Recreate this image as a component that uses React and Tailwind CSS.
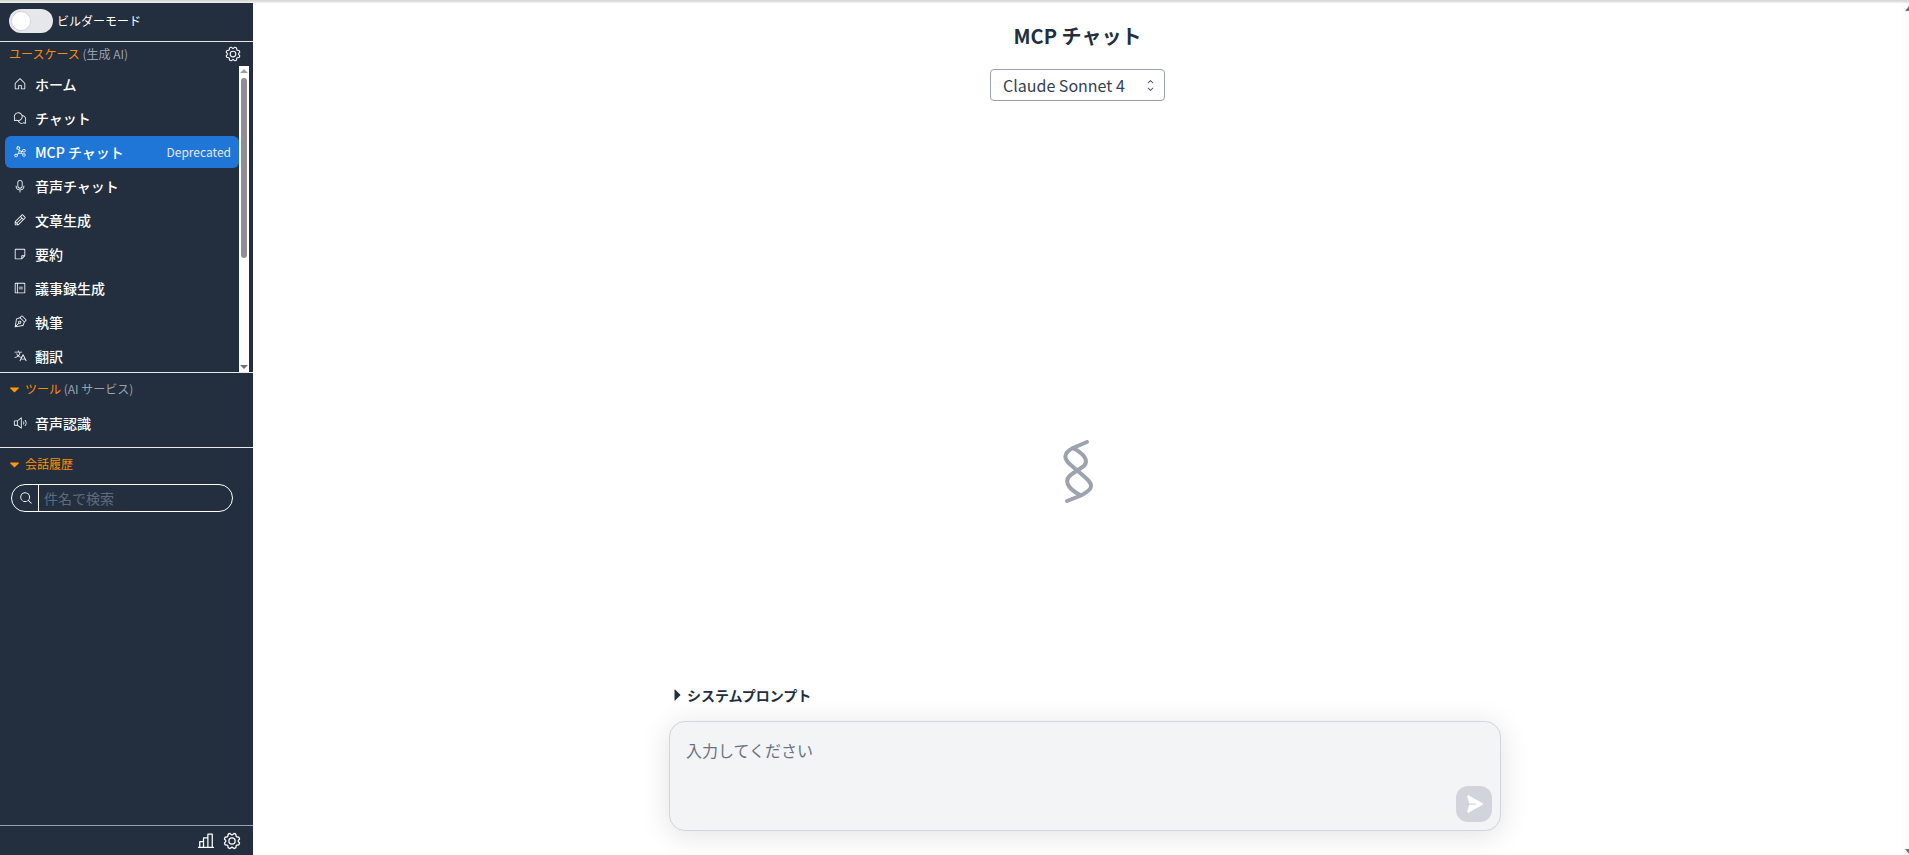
import React from "react";
import {
  PiHouse, PiChatsCircle, PiGraph, PiMicrophone, PiPencil, PiNoteBlank, PiNotebook, PiPenNib, PiTranslate,
  PiSpeakerHigh, PiMagnifyingGlass, PiGear, PiChartBar, PiCaretUpDown, PiPaperPlaneRightFill, PiCaretDownFill, PiCaretRightFill,
} from "react-icons/pi";

const items = [
  [PiHouse, "ホーム"],
  [PiChatsCircle, "チャット"],
  [PiGraph, "MCP チャット", true],
  [PiMicrophone, "音声チャット"],
  [PiPencil, "文章生成"],
  [PiNoteBlank, "要約"],
  [PiNotebook, "議事録生成"],
  [PiPenNib, "執筆"],
  [PiTranslate, "翻訳"],
];

function Item({ icon: Icon, label, active }) {
  return (
    <div className={`flex h-8 shrink-0 items-center rounded-md pl-2 pr-2 text-sm font-medium text-white ${active ? "bg-[#1f76d6]" : ""}`}>
      <Icon className="mr-2 h-[14px] w-[14px] shrink-0 text-gray-100" />
      <span className="flex-1">{label}</span>
      {active && <span className="text-xs font-normal text-gray-200">Deprecated</span>}
    </div>
  );
}

export default function App() {
  return (
    <div className="flex h-[855px] w-full flex-col overflow-hidden bg-white text-[#232f3e] [font-family:'Noto_Sans_CJK_JP','Noto_Sans',sans-serif]">
      <div className="h-[3px] shrink-0 bg-gradient-to-b from-[#d2d2ce] to-[#f2f2ee]" />
      <div className="flex min-h-0 flex-1">
        <aside className="flex w-[253px] shrink-0 flex-col bg-[#232f3e] text-white">
          <div className="flex h-[38px] shrink-0 items-center pb-[2px] pl-[9px]">
            <div className="flex h-6 w-11 items-center rounded-full bg-gray-200 pl-[2px]">
              <div className="h-5 w-5 rounded-full border border-gray-300 bg-white" />
            </div>
            <span className="ml-1 text-xs">ビルダーモード</span>
          </div>
          <div className="h-px shrink-0 bg-gray-200" />
          <div className="flex h-[24px] shrink-0 items-center justify-between pl-[9px] pr-[11px] text-xs">
            <div><span className="text-[#ff8c00]">ユースケース</span> <span className="text-gray-400">(生成 AI)</span></div>
            <PiGear className="h-[18px] w-[18px] text-gray-100" />
          </div>
          <div className="flex h-[306px] shrink-0">
            <nav className="flex w-[239px] flex-col gap-[2px] overflow-hidden pl-[5px] pt-[2px]">
              {items.map(([icon, label, active]) => <Item key={label} icon={icon} label={label} active={active} />)}
            </nav>
            <div className="flex w-[10px] flex-col items-center bg-white">
              <div className="mt-[3px] h-0 w-0 border-x-[4px] border-b-[4px] border-x-transparent border-b-gray-400" />
              <div className="mt-[5px] h-[180px] w-[6px] rounded-sm bg-[#8f8f8f]" />
              <div className="mb-[3px] mt-auto h-0 w-0 border-x-[4px] border-t-[4px] border-x-transparent border-t-gray-500" />
            </div>
          </div>
          <div className="h-px shrink-0 bg-gray-200" />
          <div className="flex h-[32px] shrink-0 items-center pl-2 text-xs">
            <PiCaretDownFill className="mr-1 h-[13px] w-[13px] text-[#ff9900]" />
            <span className="text-[#ff8c00]">ツール</span>&nbsp;<span className="text-gray-400">(AI サービス)</span>
          </div>
          <div className="mt-[2px] pl-[5px] pr-[14px]"><Item icon={PiSpeakerHigh} label="音声認識" /></div>
          <div className="mt-2 h-px shrink-0 bg-gray-200" />
          <div className="flex h-[32px] shrink-0 items-center pl-2 text-xs">
            <PiCaretDownFill className="mr-1 h-[13px] w-[13px] text-[#ff9900]" />
            <span className="text-[#ff8c00]">会話履歴</span>
          </div>
          <div className="ml-[11px] mt-[4px] flex h-[28px] w-[222px] items-center rounded-full border border-white">
            <div className="flex h-full w-[27px] items-center justify-center border-r border-white pl-[2px]">
              <PiMagnifyingGlass className="h-[14px] w-[14px]" />
            </div>
            <span className="pl-[5px] text-sm text-[#5f6b7c]">件名で検索</span>
          </div>
          <div className="mt-auto flex h-[30px] shrink-0 items-center justify-end gap-[6px] border-t border-gray-400 pr-[11px]">
            <PiChartBar className="h-5 w-5" />
            <PiGear className="h-5 w-5" />
          </div>
        </aside>

        <main className="flex min-w-0 flex-1 flex-col items-center">
          <h1 className="mt-[18px] h-[30px] text-xl font-semibold leading-[30px]">MCP チャット</h1>
          <div className="mt-[18px] flex h-[32px] w-[175px] items-center justify-between rounded border border-gray-400 pl-3 pr-[7px] text-base text-[#354150]">
            <span>Claude Sonnet 4</span>
            <PiCaretUpDown className="h-[13px] w-[13px]" />
          </div>
          <div className="flex flex-1 items-start justify-center pt-[329px]">
            <svg viewBox="0 0 80 80" className="ml-1 h-20 w-20" fill="none" stroke="#9ca3af" strokeWidth="4" strokeLinecap="round">
              <path d="M47 12 L33 18 C23 23 23 29 32 36 L47 49 C55 57 50 60 42 65 L27 71" />
              <path d="M33 18 C44 24 49 30 44 36 L32 44 C23 50 27 58 40 65" />
            </svg>
          </div>
          <div className="mb-[24px] w-[847px] pl-[15px]">
            <div className="mb-[16px] flex h-5 items-center text-sm font-bold">
              <PiCaretRightFill className="mr-[2px] h-4 w-4" />
              <span>システムプロンプト</span>
            </div>
            <div className="relative h-[110px] rounded-2xl border border-gray-300 bg-[#f3f4f6] px-4 pt-[16px] text-base text-gray-500 shadow-[0_4px_30px_rgba(0,0,0,0.12)]">
              入力してください
              <div className="absolute bottom-[8px] right-[8px] flex h-9 w-9 items-center justify-center rounded-xl bg-[#d1d5db]">
                <PiPaperPlaneRightFill className="h-5 w-5 text-white" />
              </div>
            </div>
          </div>
        </main>

        <div className="flex w-[7px] shrink-0 flex-col justify-between overflow-hidden bg-[#fdfdfd] pl-[3px]">
          <div className="mt-[3px] h-0 w-0 border-x-[4px] border-b-[5px] border-x-transparent border-b-gray-500" />
          <div className="mb-[1px] h-0 w-0 border-x-[4px] border-t-[5px] border-x-transparent border-t-gray-500" />
        </div>
      </div>
    </div>
  );
}
